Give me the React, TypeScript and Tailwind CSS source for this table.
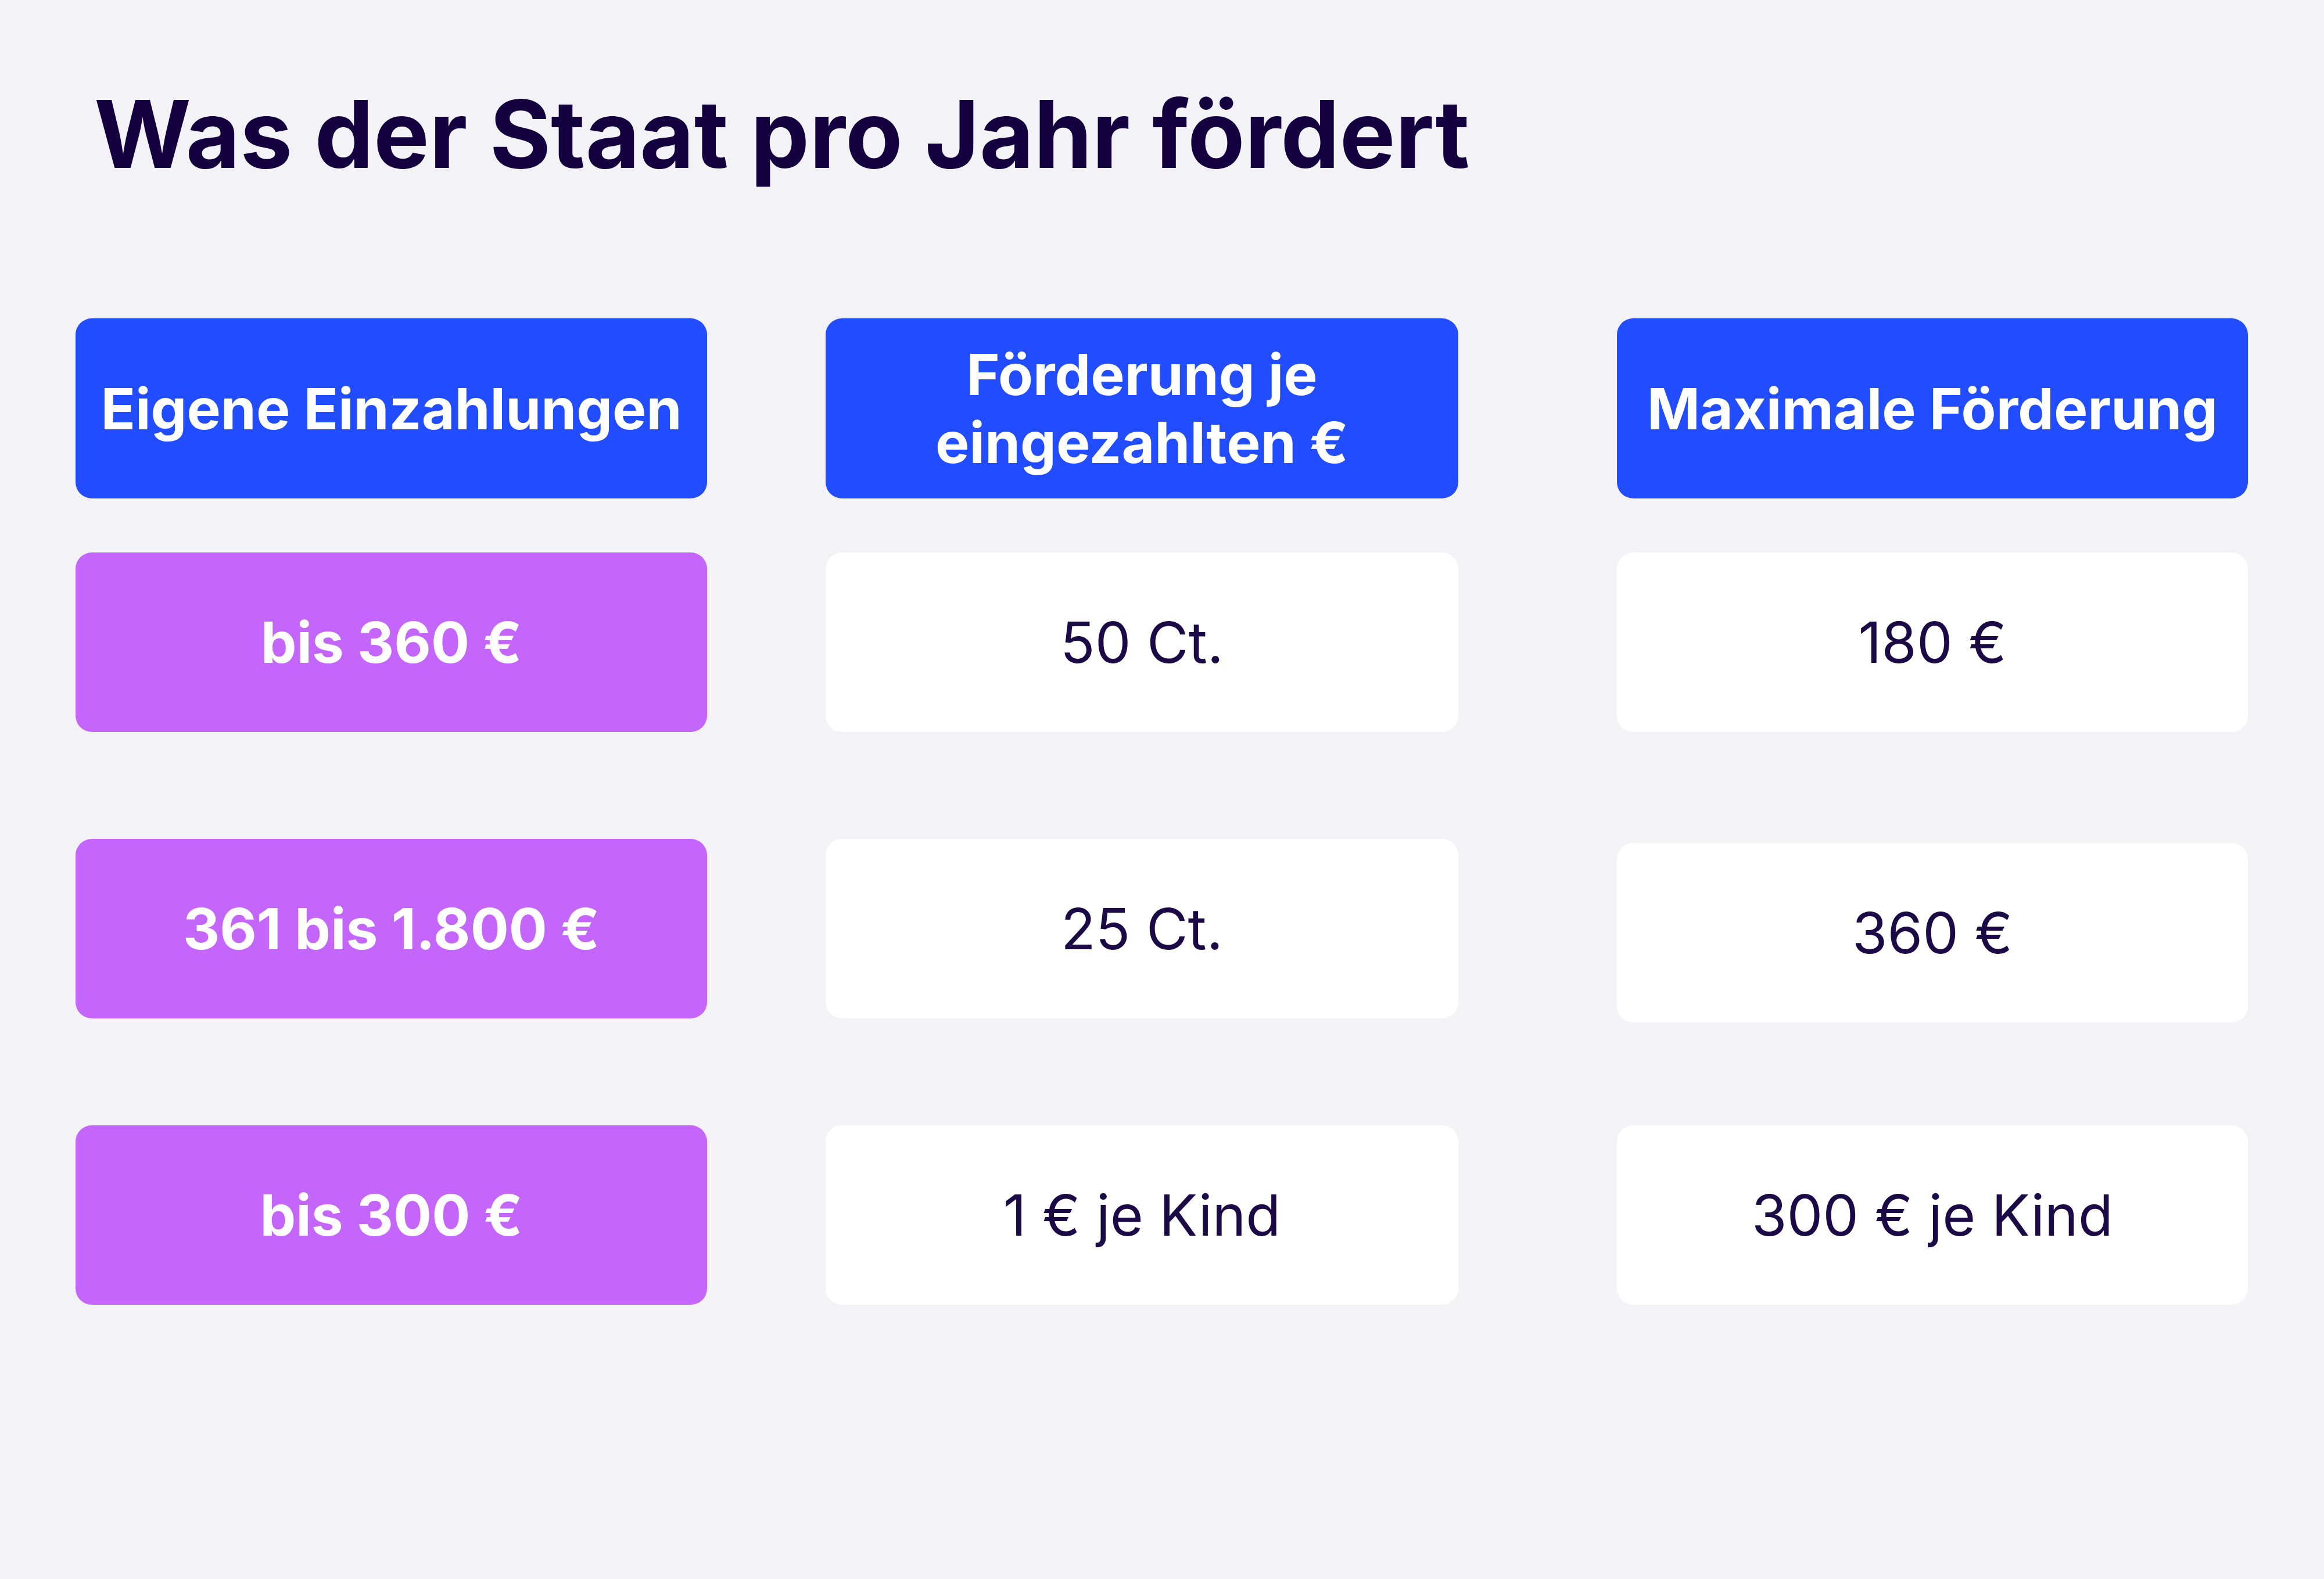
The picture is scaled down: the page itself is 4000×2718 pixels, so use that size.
const rows = [
  { amount: "bis 360 €", rate: "50 Ct.", max: "180 €", maxShift: false },
  { amount: "361 bis 1.800 €", rate: "25 Ct.", max: "360 €", maxShift: true },
  { amount: "bis 300 €", rate: "1 € je Kind", max: "300 € je Kind", maxShift: false },
];

function Box({
  className,
  children,
}: {
  className: string;
  children: React.ReactNode;
}) {
  return (
    <div
      className={`flex items-center justify-center rounded-[28px] text-center text-[98px] leading-[117px] ${className}`}
    >
      {children}
    </div>
  );
}

export default function App() {
  return (
    <div className="min-h-[2718px] w-[4000px] bg-[#f2f2f7] pt-[150px] font-['Inter',sans-serif]">
      <h1 className="pl-[162px] text-[161px] font-bold leading-none tracking-normal text-[#14003f]">
        Was der Staat pro Jahr fördert
      </h1>

      <div className="mt-[237px] flex flex-col pl-[130px]">
        {/* Header */}
        <div className="flex items-start">
          <Box className="h-[310px] w-[1087px] bg-[#214cff] font-bold text-white">
            Eigene Einzahlungen
          </Box>
          <Box className="ml-[204px] h-[310px] w-[1089px] bg-[#214cff] font-bold text-white">
            Förderung je
            <br />
            eingezahlten €
          </Box>
          <Box className="ml-[273px] h-[310px] w-[1086px] bg-[#214cff] font-bold text-white">
            Maximale Förderung
          </Box>
        </div>

        <div className="mt-[93px] flex flex-col gap-[184px]">
          {rows.map((row) => (
            <div key={row.amount} className="flex items-start">
              <Box className="h-[309px] w-[1087px] bg-[#c466fc] font-bold text-white">
                {row.amount}
              </Box>
              <Box className="ml-[204px] h-[309px] w-[1089px] bg-white text-[#1b0a45]">
                {row.rate}
              </Box>
              <Box
                className={`ml-[273px] h-[309px] w-[1086px] bg-white text-[#1b0a45] ${
                  row.maxShift ? "mt-[7px] -mb-[7px]" : ""
                }`}
              >
                {row.max}
              </Box>
            </div>
          ))}
        </div>
      </div>
    </div>
  );
}
